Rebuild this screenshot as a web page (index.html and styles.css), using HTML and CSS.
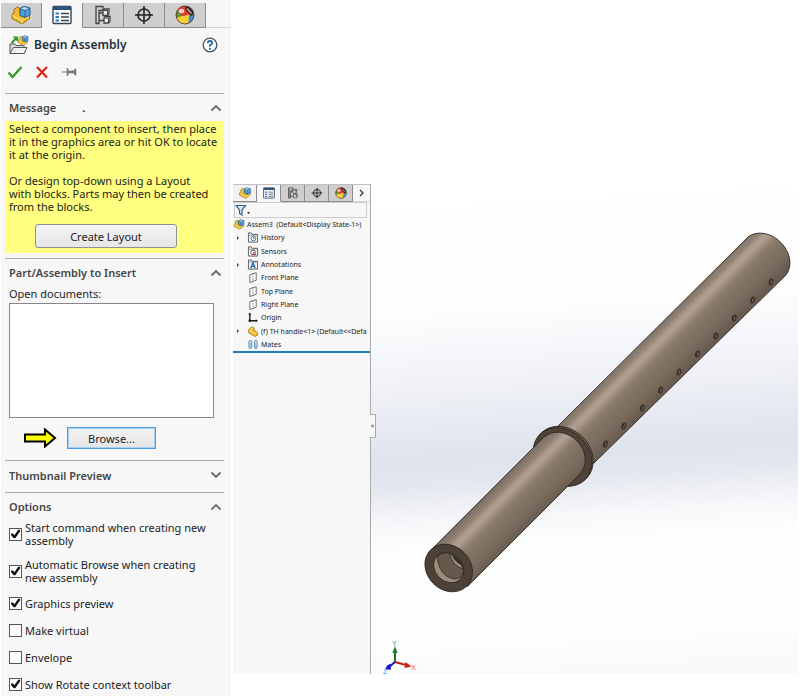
FILE: index.html
```html
<!DOCTYPE html>
<html lang="en">
<head>
<meta charset="utf-8">
<title>Begin Assembly</title>
<link rel="stylesheet" href="styles.css">
</head>
<body>
<svg class="defs" width="0" height="0" aria-hidden="true">
  <symbol id="i-assembly" viewBox="0 0 20 20">
    <path d="M1 9.500 3 8V4.500L6.500 2 9 3.500V8l4 2 5.500-2.500v6L11 19 1 13.500Z" fill="#f2bd2c" stroke="#8f6508" stroke-width=".9" stroke-linejoin="round"/>
    <path d="m1.500 10.500 9.500 5V18.500M11 15.500l7-4" fill="none" stroke="#ffe58a" stroke-width="1"/>
    <path d="m9 3.500 4-2 6 1.500v7L14 12.500 9 10.500Z" fill="#4f9fd8" stroke="#174e83" stroke-width=".9" stroke-linejoin="round"/>
    <path d="m9 3.500 5 2L19 3l-6-1.500Z" fill="#b9dcf3" stroke="#174e83" stroke-width=".7"/>
    <path d="M14 5.500v7" stroke="#174e83" stroke-width=".7"/>
  </symbol>
  <symbol id="i-list" viewBox="0 0 20 20">
    <rect x="1" y="1.500" width="18" height="17" rx="1" fill="#fff" stroke="#30455c" stroke-width="1.400"/>
    <path d="M1 1.500h18V5H1z" fill="#30557c"/>
    <path d="M3.500 8.500H7M3.500 12H7M3.500 15.500H7" stroke="#2a7bc4" stroke-width="2"/>
    <path d="M9 8.500h8M9 12h8M9 15.500h8" stroke="#3c4652" stroke-width="1.300"/>
  </symbol>
  <symbol id="i-config" viewBox="0 0 20 20">
    <path d="M3 18.500v-17h7v4M3 1.500v17h3v-13h4" fill="none" stroke="#444" stroke-width="1.300"/>
    <path d="M6 8h4M6 15.500h5" stroke="#444" stroke-width="1.300"/>
    <path d="M10 5.500 11.500 4H16v5l-1.500 1.500H10ZM11 13l1.500-1.500H17v5L15.500 18H11Z" fill="#eee" stroke="#444" stroke-width="1.300"/>
    <path d="M10 5.500h4.500v5M14.500 5.500 16 4M11 13h4.500v5M15.500 13l1.500-1.500" fill="none" stroke="#444"/>
  </symbol>
  <symbol id="i-target" viewBox="0 0 20 20">
    <circle cx="10" cy="10" r="6" fill="none" stroke="#222" stroke-width="1.600"/>
    <path d="M10 1v18M1 10h18" stroke="#222" stroke-width="1.600"/>
  </symbol>
  <symbol id="i-ball" viewBox="0 0 20 20">
    <circle cx="10" cy="10" r="9" fill="#e23b24"/>
    <path d="M3 5A9 9 0 0 0 1.500 13L7 12 8 6Z" fill="#4b9c3c"/>
    <path d="M1.500 13A9 9 0 0 0 9 19L9.500 11 7 11Z" fill="#f5cf32"/>
    <path d="M9 19A9 9 0 0 0 19 9L9.500 11Z" fill="#4389d4"/>
    <path d="M8.500 11 14 9.500 13.500 18.300A9 9 0 0 1 7.500 18.700Z" fill="#f5cf32"/>
    <path d="M3 5A9 9 0 0 1 11 1L9.500 11 6.500 11Z" fill="#e5402b"/>
    <path d="M11 1A9 9 0 0 1 18.900 9L16 11 10 4Z" fill="#3b2222"/>
    <path d="m12 3.500 4.500 5" stroke="#c7b5b5" stroke-width="1.300"/>
    <ellipse cx="6.500" cy="6" rx="2.700" ry="2.200" fill="#fff" opacity=".75"/>
    <circle cx="10" cy="10" r="9" fill="none" stroke="#57402e" stroke-width=".9"/>
  </symbol>
  <symbol id="i-folder" viewBox="0 0 12 12">
    <path d="M1 11V1h3l1 1.500h6V11Z" fill="#f3f3f3" stroke="#555" stroke-width="1"/>
    <path d="M1 3.500h10" stroke="#777" stroke-width=".7"/>
  </symbol>
  <symbol id="i-plane" viewBox="0 0 12 12">
    <path d="M2.500 3 9.500.800v8.200L2.500 11.500Z" fill="#fff" stroke="#555" stroke-width=".9"/>
    <path d="M6 1v10" stroke="#555" stroke-width=".7" stroke-dasharray="2 1"/>
  </symbol>
  <symbol id="i-up" viewBox="0 0 12 8"><path d="m1.500 6.500 4.500-4.500 4.500 4.500" fill="none" stroke="#6b6b6b" stroke-width="1.800"/></symbol>
  <symbol id="i-down" viewBox="0 0 12 8"><path d="m1.500 1.500 4.500 4.500 4.500-4.500" fill="none" stroke="#6b6b6b" stroke-width="1.800"/></symbol>
</svg>

<aside class="manager">
  <nav class="tabs" aria-label="Manager tabs">
    <button class="tab" aria-label="Feature tree"><svg><use href="#i-assembly"/></svg></button>
    <button class="tab current" aria-label="Properties"><svg><use href="#i-list"/></svg></button>
    <button class="tab" aria-label="Configurations"><svg><use href="#i-config"/></svg></button>
    <button class="tab" aria-label="Dimensions"><svg><use href="#i-target"/></svg></button>
    <button class="tab" aria-label="Appearance"><svg><use href="#i-ball"/></svg></button>
  </nav>
  <header class="title">
    <svg class="title-icon" viewBox="0 0 20 20">
      <path d="M1 18.500V9h5l1 1.500h8v8Z" fill="#ddd" stroke="#555"/>
      <path d="m1 18.500 3.500-6H18l-3 6Z" fill="#f4f4f4" stroke="#555" stroke-linejoin="round"/>
      <path d="m2.500 8 5-5" stroke="#2c9a37" stroke-width="2"/><path d="M3.500 1.500H9V7Z" fill="#2c9a37"/>
      <use href="#i-assembly" x="8" y="0" width="12" height="11"/>
    </svg>
    <h1>Begin Assembly</h1>
    <button class="plain" aria-label="Help"><svg class="help" viewBox="0 0 16 16"><circle cx="8" cy="8" r="6.800" fill="#fff" stroke="#46586b" stroke-width="1.300"/><path d="M5.800 6.200Q5.800 4 8 4t2.200 2Q10.200 7.300 8 8.200V9.700" fill="none" stroke="#256ba8" stroke-width="1.800"/><circle cx="8" cy="11.800" r="1.100" fill="#256ba8"/></svg></button>
  </header>
  <div class="actions">
    <button class="plain" aria-label="OK"><svg viewBox="0 0 16 14"><path d="m1.500 7.500 4 4.500L14.500 2" fill="none" stroke="#2e9b1e" stroke-width="2.200"/></svg></button>
    <button class="plain" aria-label="Cancel"><svg viewBox="0 0 16 14"><path d="m3 2 10 10.500M13 2 3 12.500" stroke="#dc2417" stroke-width="2.200"/></svg></button>
    <button class="plain" aria-label="Keep visible"><svg viewBox="0 0 16 14"><path d="M1 7h6" stroke="#888" stroke-width="1.300"/><path d="M6.500 3v8M14.500 3.500v7" stroke="#777" stroke-width="1.500"/><path d="M7 5q3.500 1.500 7-.5v5Q10.500 7.500 7 9Z" fill="#808080"/></svg></button>
  </div>

  <section class="group message">
    <h2>Message <span class="dot">.</span><svg class="chevron"><use href="#i-up"/></svg></h2>
    <div class="note">
      <p>Select a component to insert, then place<br>it in the graphics area or hit OK to locate<br>it at the origin.</p>
      <p>Or design top-down using a Layout<br>with blocks. Parts may then be created<br>from the blocks.</p>
      <button class="push">Create Layout</button>
    </div>
  </section>

  <section class="group insert">
    <h2>Part/Assembly to Insert<svg class="chevron"><use href="#i-up"/></svg></h2>
    <label class="field-label" for="docs">Open documents:</label>
    <select id="docs" class="docs" size="6"></select>
    <div class="browse-row">
      <svg class="pointer" viewBox="0 0 34 20"><path d="M2 6.500h20v-5L32 10l-10 8.500v-5H2Z" fill="#ff0" stroke="#000" stroke-width="2"/></svg>
      <button class="push focused">Browse...</button>
    </div>
  </section>

  <section class="group thumb">
    <h2>Thumbnail Preview<svg class="chevron"><use href="#i-down"/></svg></h2>
  </section>

  <section class="group options">
    <h2>Options<svg class="chevron"><use href="#i-up"/></svg></h2>
    <div class="checks">
      <label><input type="checkbox" checked><span>Start command when creating new<br>assembly</span></label>
      <label><input type="checkbox" checked><span>Automatic Browse when creating<br>new assembly</span></label>
      <label><input type="checkbox" checked><span>Graphics preview</span></label>
      <label><input type="checkbox"><span>Make virtual</span></label>
      <label><input type="checkbox"><span>Envelope</span></label>
      <label><input type="checkbox" checked><span>Show Rotate context toolbar</span></label>
    </div>
  </section>
</aside>

<main class="window">
  <div class="tree-pane">
    <nav class="tabs small" aria-label="Document tabs">
      <button class="tab lit" aria-label="Feature tree"><svg><use href="#i-assembly"/></svg></button>
      <button class="tab current" aria-label="Properties"><svg><use href="#i-list"/></svg></button>
      <button class="tab" aria-label="Configurations"><svg><use href="#i-config"/></svg></button>
      <button class="tab" aria-label="Dimensions"><svg><use href="#i-target"/></svg></button>
      <button class="tab" aria-label="Appearance"><svg><use href="#i-ball"/></svg></button>
      <button class="more" aria-label="More tabs"><svg viewBox="0 0 6 8"><path d="m1 1 3 3-3 3" fill="none" stroke="#333" stroke-width="1.200"/></svg></button>
    </nav>
    <div class="filter">
      <svg viewBox="0 0 16 12"><path d="M1 1.500h9.500L7 6v5L4.500 9.500V6Z" fill="#d7e8f5" stroke="#355f86" stroke-width="1.200"/><path d="M12 8h3l-1.500 2Z" fill="#222"/></svg>
      <input type="text" aria-label="Filter">
    </div>
    <ul class="tree">
      <li class="root"><svg><use href="#i-assembly"/></svg>Assem3&nbsp; (Default&lt;Display State-1&gt;)</li>
      <li class="open"><svg viewBox="0 0 12 12"><use href="#i-folder"/><circle cx="6.500" cy="7" r="2.600" fill="#fff" stroke="#397ba9"/><path d="M6.500 5.500V7H8" fill="none" stroke="#333" stroke-width=".7"/></svg>History</li>
      <li><svg viewBox="0 0 12 12"><use href="#i-folder"/><circle cx="6" cy="7" r="2.500" fill="#fff" stroke="#444"/><path d="m6 7 3 3" stroke="#c9302c" stroke-width="1.400"/></svg>Sensors</li>
      <li class="open"><svg viewBox="0 0 12 12"><use href="#i-folder"/><path d="m3.500 10 2.500-6 2.500 6M4.500 8h3" fill="none" stroke="#1d66ad" stroke-width="1.300"/></svg>Annotations</li>
      <li><svg><use href="#i-plane"/></svg>Front Plane</li>
      <li><svg><use href="#i-plane"/></svg>Top Plane</li>
      <li><svg><use href="#i-plane"/></svg>Right Plane</li>
      <li><svg viewBox="0 0 12 12"><path d="M2.500 2v7.500H10" fill="none" stroke="#222" stroke-width="1.500"/><path d="M.800 3 2.500.500 4.200 3ZM9 7.800l2.500 1.700L9 11.200Z" fill="#222"/><circle cx="2.500" cy="9.500" r="1.500" fill="#222"/></svg>Origin</li>
      <li class="open"><svg viewBox="0 0 12 12"><path d="M1 4.500 4 1l3 1 .500 3 3.500 2v3L8 11.500 1.500 7.500Z" fill="#f2bd2c" stroke="#946b0d" stroke-width=".8"/><path d="M2 5 8 8.500l3-1.500M4 1.500 4.500 4" fill="none" stroke="#fff0a7" stroke-width=".8"/></svg>(f) TH handle&lt;1&gt; (Default&lt;&lt;Defa</li>
      <li><svg viewBox="0 0 12 12"><path d="M1.500 3v5.500q1.500 4 3 0V3q-1.500-3-3 0m6 0v5.500q1.500 4 3 0V3q-1.500-3-3 0" fill="#d9ebf7" stroke="#6e9fc4" stroke-width="1.200"/><path d="M3 4v5M9 4v5" stroke="#6e9fc4" stroke-width=".8"/></svg>Mates</li>
    </ul>
    <button class="splitter" aria-label="Collapse tree"></button>
  </div>
  <svg class="viewport" viewBox="371 184 427 490" role="img" aria-label="TH handle model">
    <defs>
      <linearGradient id="sky" gradientUnits="userSpaceOnUse" x1="600" y1="184" x2="630" y2="674">
        <stop offset="0" stop-color="#fff"/><stop offset=".24" stop-color="#fdfdfe"/><stop offset=".4" stop-color="#eff1f6"/><stop offset=".54" stop-color="#dfe3ed"/><stop offset=".59" stop-color="#e4e7ef"/><stop offset=".67" stop-color="#f7f8fa"/><stop offset=".73" stop-color="#fefefe"/><stop offset=".9" stop-color="#fefefe"/><stop offset="1" stop-color="#f9f9fb"/>
      </linearGradient>
      <linearGradient id="tube" gradientUnits="userSpaceOnUse" x1="430" y1="551" x2="467" y2="588">
        <stop offset="0" stop-color="#7b6e61"/><stop offset=".14" stop-color="#8f8072"/><stop offset=".25" stop-color="#af9f90"/><stop offset=".31" stop-color="#ac9c8d"/><stop offset=".44" stop-color="#8d7e6e"/><stop offset=".58" stop-color="#807363"/><stop offset=".8" stop-color="#7a6b5e"/><stop offset="1" stop-color="#695b50"/>
      </linearGradient>
      <g id="hole"><ellipse rx="1.700" ry="3" transform="rotate(15)" fill="#6d6053" stroke="#332c25" stroke-width="1.100"/><path d="M-1 1.500Q-1.500-.5 0-2" fill="none" stroke="#29231e" stroke-width="1"/></g>
    </defs>
    <path d="M371 184h428v490H371z" fill="url(#sky)"/>
    <g stroke="#2e2923" stroke-width=".9" stroke-linejoin="round">
      <path d="M557 427 748 237A27 21.500 45 0 1 786 275L593 464Z" fill="url(#tube)"/>
      <ellipse cx="563.800" cy="455.700" rx="32" ry="26.500" transform="rotate(45 563.800 455.700)" fill="#6e6154"/>
      <ellipse cx="562.500" cy="457" rx="32" ry="26.500" transform="rotate(45 562.500 457)" fill="#4d4338"/>
      <path d="M430.800 550.300 543 438A25.800 22 45 0 1 579.500 474.500L467.200 586.700Z" fill="url(#tube)"/>
      <ellipse cx="448.700" cy="568" rx="25.600" ry="21.800" transform="rotate(45 448.700 568)" fill="#4b4137"/>
      <ellipse cx="448.700" cy="567.700" rx="16.300" ry="13.700" transform="rotate(45 448.700 567.700)" fill="#9d8b7b"/>
      <path d="M437.500 556Q445 550 454 555 463 561 463.500 570 463.500 579 454 579 444 577 440 568 437 561 437.500 556Z" fill="#66594c" stroke-width=".8"/>
      <path d="M449.500 554Q460 558 463 569 453 566 449.500 554Z" fill="#9d8b7b" stroke-width=".8"/>
      <path d="M452 555.500Q460 558.500 462.500 566 455 562 452 555.500Z" fill="#332c25" stroke="none"/>
    </g>
    <use href="#hole" x="771" y="282"/><use href="#hole" x="752.600" y="300"/><use href="#hole" x="734.200" y="318"/><use href="#hole" x="715.800" y="336"/><use href="#hole" x="697.400" y="354"/><use href="#hole" x="679" y="372"/><use href="#hole" x="660.600" y="390"/><use href="#hole" x="642.200" y="408"/><use href="#hole" x="623.800" y="426"/><use href="#hole" x="605.400" y="444"/>
    <path d="M395 662v-10" stroke="#1e7526" stroke-width="2"/><path d="m392.500 653 2.500-7 2.500 7Z" fill="#1e7526"/>
    <path d="m395 662 11 3" stroke="#c92018" stroke-width="2"/><path d="m405.500 662 6 4.500-7 1.500Z" fill="#c92018"/>
    <path d="m395 662-6 5" stroke="#171ba8" stroke-width="2"/><path d="m391.500 664-1 6-5-1q1-5 6-5Z" fill="#171bc8"/>
    <g class="axis"><text x="392" y="646" fill="#4ba54f">Y</text><text x="411" y="670" fill="#ee5145">X</text><text x="383" y="674" fill="#3b91e5">Z</text></g>
  </svg>
</main>
</body>
</html>
```
FILE: styles.css
```css
* { box-sizing: border-box; }

body {
  margin: 0;
  display: flex;
  align-items: flex-start;
  gap: 2px;
  min-height: 100vh;
  background: #fff;
  color: #1c1c1c;
  font: 11px/13px "Noto Sans", "Open Sans", sans-serif;
}

.defs { position: absolute; }
button, input, select { font: inherit; color: inherit; }
svg { display: block; flex: none; }
h1, h2, p, ul { margin: 0; padding: 0; }

/* Property manager */
.manager {
  flex: 0 0 230px;
  min-height: 100vh;
  margin-left: 1px;
  padding-top: 3px;
  background: #f7f7f7;
}

.tabs { display: flex; height: 25px; border-bottom: 1px solid #d5d5d5; }
.tab {
  display: flex;
  align-items: center;
  justify-content: center;
  width: 41px;
  height: 25px;
  padding: 0;
  background: #cfcfcf;
  border: solid #8c8c8c;
  border-width: 0 1px 1px 0;
}
.tab svg { width: 20px; height: 20px; }
.tab.current { background: #f7f7f7; border-bottom-color: #f7f7f7; }

.title { display: flex; align-items: center; gap: 5px; height: 34px; padding: 0 13px 0 8px; }
.title-icon { width: 20px; height: 20px; }
h1 { flex: 1; font-size: 12px; font-weight: 600; line-height: 16px; color: #222e3c; }
.plain { padding: 0; border: 0; background: none; }
.help { width: 16px; height: 16px; }

.actions { display: flex; align-items: center; gap: 11px; height: 20px; padding-left: 6px; }
.actions svg { width: 16px; height: 14px; }

.group { margin: 0 7px 0 4px; border-top: 1px solid #aaa; }
.message { margin-top: 11px; }
h2 {
  display: flex;
  align-items: center;
  height: 27px;
  padding: 0 2px 0 4px;
  font-size: 11px;
  font-weight: 600;
  color: #464646;
}
.chevron { width: 12px; height: 8px; margin-left: auto; }
.dot { margin-left: 26px; color: #222; }

.note { padding: 1px 4px 5px; background: #ffff80; white-space: nowrap; }
.note p { margin-bottom: 13px; }
.push {
  display: block;
  height: 24px;
  padding: 0;
  border: 1px solid #8d919b;
  border-radius: 3px;
  background: linear-gradient(#f3f3f3, #e6e6e6);
}
.note .push { width: 142px; margin: -2px 0 0 26px; }

.insert { margin-top: 5px; }
.field-label { display: block; padding: 1px 4px 3px; }
.docs {
  display: block;
  width: 205px;
  height: 115px;
  margin-left: 4px;
  border: 1px solid #85878d;
  border-radius: 0;
  background: #fff;
}
.browse-row { display: flex; align-items: center; gap: 10px; height: 42px; padding: 0 0 2px 18px; }
.pointer { width: 34px; height: 20px; }
.push.focused { width: 89px; height: 22px; border: 1px solid #4a9be8; border-radius: 0; box-shadow: inset 0 0 0 1px #a5cff5; }

.thumb h2 { height: 31px; padding-bottom: 3px; }
.checks { display: flex; flex-direction: column; gap: 11px; padding: 1px 4px; }
.checks label { display: flex; align-items: center; gap: 3px; min-height: 16px; white-space: nowrap; }
.checks input {
  appearance: none;
  flex: none;
  width: 13px;
  height: 13px;
  margin: 0;
  border: 1px solid #555;
  background: #fff;
}
.checks input:checked::before {
  content: "";
  display: block;
  width: 11px;
  height: 11px;
  background: #111;
  clip-path: polygon(10% 45%, 28% 45%, 40% 62%, 75% 12%, 92% 12%, 92% 25%, 48% 88%, 34% 88%, 10% 62%);
}

/* Document window */
.window {
  display: flex;
  flex: 1;
  min-width: 0;
  margin: 184px 6px 0 0;
}
.tree-pane {
  position: relative;
  flex: 0 0 138px;
  background: #f7f7f7;
  border-right: 1px solid #aaa;
  font-size: 7px;
}
.tabs.small { height: 18px; border-top: 1px solid #c0c0c0; }
.small .tab { width: 24px; height: 17px; }
.small .tab svg { width: 12px; height: 12px; }
.small .lit { background: #f2f2f2; }
.more { flex: 1; display: flex; align-items: center; justify-content: center; padding: 0; border: 0; background: none; }
.more svg { width: 6px; height: 8px; }
.filter { display: flex; align-items: center; height: 16px; margin: 0 3px 0 1px; border: 1px solid #ccc; }
.filter svg { width: 16px; height: 12px; }
.filter input { flex: 1; min-width: 0; height: 12px; padding: 0; border: 0; background: none; }

.tree {
  display: grid;
  grid-auto-rows: 1fr;
  height: 135px;
  list-style: none;
  overflow: hidden;
  border-bottom: 2px solid #1c7fc4;
}
.tree li { display: flex; align-items: center; gap: 2px; padding-left: 14px; white-space: nowrap; }
.tree .root { padding-left: 0; }
.tree svg { width: 12px; height: 11px; }
.tree .open { padding-left: 4px; }
.tree .open::before {
  content: "";
  margin-right: 6px;
  border: solid transparent;
  border-width: 2px 0 2px 2px;
  border-left-color: #444;
}
.splitter {
  position: absolute;
  top: 47%;
  right: -6px;
  width: 6px;
  height: 24px;
  padding: 0;
  border: 1px solid #aaa;
  border-left: 0;
  background: radial-gradient(circle, #999 0 1px, #f7f7f7 2px);
}
.viewport { flex: 1; min-width: 0; height: auto; }
.axis { font: 7px "Liberation Sans", sans-serif; }
```
